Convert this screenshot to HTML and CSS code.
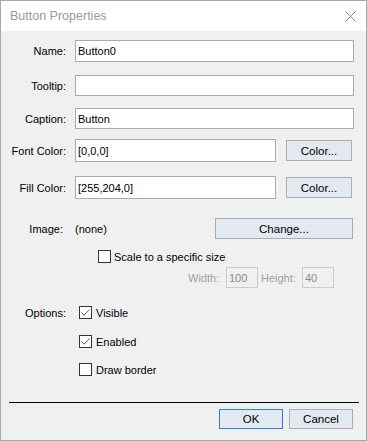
FILE: index.html
```html
<!DOCTYPE html>
<html lang="en">

<head>
    <meta charset="UTF-8">
    <title>Button Properties</title>
    <link rel="stylesheet" href="styles.css">
</head>

<body>
    <div class="dialogo">
        <header class="titulo">
            <span>Button Properties</span>
            <svg class="fechar" width="11" height="11" viewBox="0 0 11 11">
                <path d="M0.5 0.5 L10.5 10.5 M10.5 0.5 L0.5 10.5" stroke="#8a8a8a" stroke-width="1" fill="none" />
            </svg>
        </header>

        <div class="campo linha-nome">
            <label>Name:</label>
            <input class="texto" type="text" value="Button0">
        </div>
        <div class="campo linha-tooltip">
            <label>Tooltip:</label>
            <input class="texto" type="text" value="">
        </div>
        <div class="campo linha-caption">
            <label>Caption:</label>
            <input class="texto" type="text" value="Button">
        </div>
        <div class="campo cor linha-fonte">
            <label>Font Color:</label>
            <input class="texto" type="text" value="[0,0,0]">
            <button class="botao">Color...</button>
        </div>
        <div class="campo cor linha-preench">
            <label>Fill Color:</label>
            <input class="texto" type="text" value="[255,204,0]">
            <button class="botao">Color...</button>
        </div>

        <div class="linha-imagem">
            <label>Image:</label>
            <span class="nenhuma">(none)</span>
            <button class="botao trocar">Change...</button>
        </div>
        <div class="opcao linha-escala">
            <span class="caixa"></span>
            <span>Scale to a specific size</span>
        </div>
        <div class="linha-tamanho">
            <span class="rotulo-inativo rot-largura">Width:</span>
            <input class="inativo" type="text" value="100" disabled>
            <span class="rotulo-inativo rot-altura">Height:</span>
            <input class="inativo" type="text" value="40" disabled>
        </div>

        <div class="linha-opcoes">
            <label>Options:</label>
            <div class="opcao">
                <span class="caixa marcada">
                    <svg width="11" height="11" viewBox="0 0 11 11">
                        <polyline points="1.5,5.5 4,8.2 9.5,2.5" stroke="#5a5a5a" stroke-width="1" fill="none" />
                    </svg>
                </span>
                <span>Visible</span>
            </div>
        </div>
        <div class="opcao sub-opcao linha-habilitado">
            <span class="caixa marcada">
                <svg width="11" height="11" viewBox="0 0 11 11">
                    <polyline points="1.5,5.5 4,8.2 9.5,2.5" stroke="#5a5a5a" stroke-width="1" fill="none" />
                </svg>
            </span>
            <span>Enabled</span>
        </div>
        <div class="opcao sub-opcao linha-borda">
            <span class="caixa"></span>
            <span>Draw border</span>
        </div>

        <hr class="separador">

        <footer class="rodape">
            <button class="botao padrao">OK</button>
            <button class="botao">Cancel</button>
        </footer>
    </div>
</body>

</html>
```

FILE: styles.css
```css
/* Estilos gerais */
body {
    margin: 0;
    padding: 0;
    background-color: #f0f0f0;
}

.dialogo {
    width: 367px;
    height: 441px;
    box-sizing: border-box;
    border: 1px solid #a8a8a8;
    background-color: #f0f0f0;
    font-family: "Liberation Sans", Arial, sans-serif;
    font-size: 11px;
    color: #000;
}

/* Barra de titulo */
header.titulo {
    height: 30px;
    background-color: #fff;
    display: flex;
    align-items: center;
    justify-content: space-between;
    padding: 0 10px 0 9px;
    color: #9a9a9a;
    font-size: 12.5px;
}

header.titulo span {
    margin-top: -1px;
}

/* Campos de texto */
.campo {
    display: grid;
    grid-template-columns: 65px 1fr;
    column-gap: 9px;
    align-items: center;
    padding-right: 12px;
}

.campo label,
.linha-opcoes label {
    text-align: right;
}

.campo.cor {
    grid-template-columns: 65px 201px 67px;
    column-gap: 9px;
}

.campo.cor .botao {
    margin-left: 1px;
}

.texto {
    box-sizing: border-box;
    height: 100%;
    width: 100%;
    margin: 0;
    border: 1px solid #aaaaaa;
    background-color: #fff;
    padding: 0 2px;
    font: inherit;
    color: #000;
    outline: none;
}

.linha-nome {
    margin-top: 9px;
    height: 22px;
}

.linha-tooltip {
    margin-top: 13px;
    height: 21px;
}

.linha-caption {
    margin-top: 12px;
    height: 21px;
}

.linha-fonte {
    margin-top: 10px;
    height: 23px;
}

.linha-preench {
    margin-top: 14px;
    height: 23px;
}

/* Botoes */
.botao {
    box-sizing: border-box;
    height: 21px;
    margin: 0;
    padding: 0;
    border: 1px solid #adadad;
    background-color: #e3e9f0;
    font: inherit;
    font-size: 11.5px;
    color: #000;
}

.botao.padrao {
    border-color: #2b7fd4;
}

/* Imagem */
.linha-imagem {
    display: grid;
    grid-template-columns: 62px 128px 138px;
    column-gap: 12px;
    align-items: center;
    margin-top: 19px;
    height: 21px;
}

.linha-imagem label {
    text-align: right;
}

/* Caixas de marcar */
.opcao {
    display: flex;
    align-items: center;
    height: 13px;
    gap: 4px;
}

.caixa {
    box-sizing: border-box;
    width: 13px;
    height: 13px;
    border: 1px solid #333;
    background-color: #fff;
    display: flex;
    align-items: center;
    justify-content: center;
}

.linha-escala {
    margin-top: 11px;
    padding-left: 97px;
    gap: 3px;
}

.linha-tamanho {
    display: flex;
    align-items: center;
    margin-top: 4px;
    height: 21px;
    padding-left: 187px;
}

.rotulo-inativo {
    color: #a0a0a0;
}

.rot-largura {
    width: 38px;
}

.rot-altura {
    width: 41px;
    margin-left: 3px;
}

.inativo {
    box-sizing: border-box;
    width: 32px;
    height: 21px;
    margin: 0;
    padding: 0 2px;
    border: 1px solid #cccccc;
    background-color: #f0f0f0;
    font: inherit;
    color: #8a8a8a;
}

/* Opcoes */
.linha-opcoes {
    display: grid;
    grid-template-columns: 65px auto;
    column-gap: 13px;
    align-items: center;
    margin-top: 18px;
    height: 13px;
}

.sub-opcao {
    padding-left: 78px;
}

.linha-habilitado {
    margin-top: 16px;
}

.linha-borda {
    margin-top: 15px;
}

/* Rodape */
hr.separador {
    border: none;
    border-top: 1px solid #000;
    margin: 26px 7px 0 8px;
    height: 0;
}

footer.rodape {
    display: flex;
    justify-content: flex-end;
    gap: 6px;
    margin-top: 6px;
    padding-right: 13px;
}

footer.rodape .botao {
    width: 64px;
    height: 20px;
}
```
